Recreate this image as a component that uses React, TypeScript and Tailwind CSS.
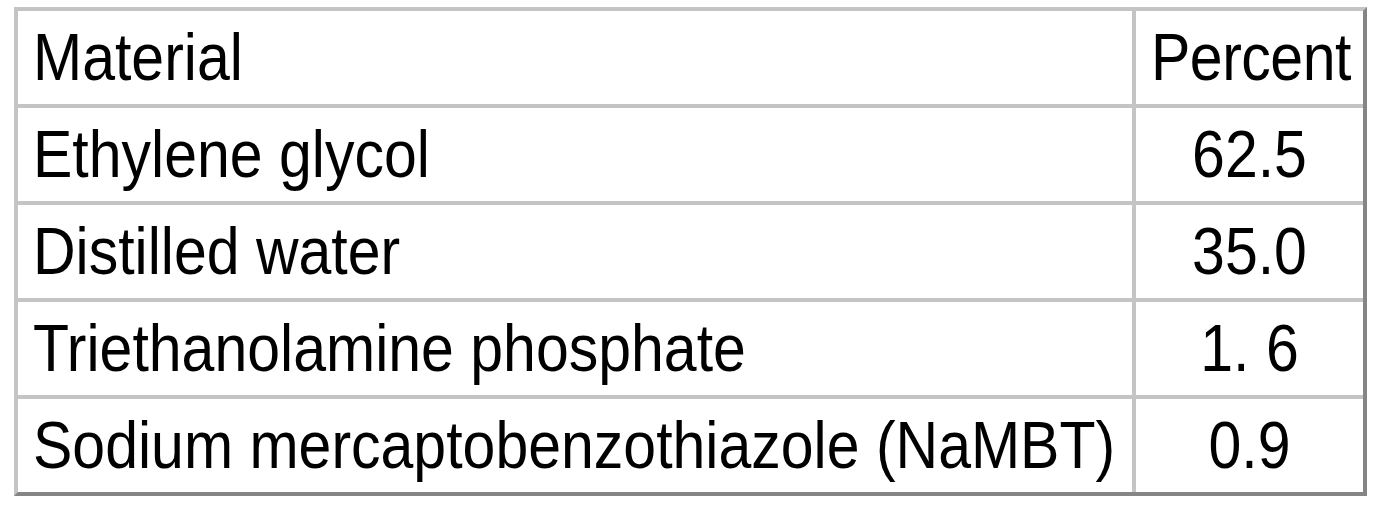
import { Fragment } from "react";

const rows = [
  { material: "Ethylene glycol", percent: "62.5" },
  { material: "Distilled water", percent: "35.0" },
  { material: "Triethanolamine phosphate", percent: "1. 6" },
  { material: "Sodium mercaptobenzothiazole (NaMBT)", percent: "0.9" },
];

function Cell({ children, center }: { children: React.ReactNode; center?: boolean }) {
  return (
    <div
      className={`flex h-[93px] items-center bg-white px-[15px] ${center ? "justify-center" : ""}`}
    >
      <span className="inline-block origin-center scale-y-[1.13] whitespace-pre leading-none">
        {children}
      </span>
    </div>
  );
}

export default function App() {
  return (
    <div
      className="min-h-screen bg-white pl-[14px] pt-[7px] text-[59px] text-black"
      style={{ fontFamily: '"Liberation Sans", Arial, sans-serif' }}
    >
      <div className="inline-block border-4 border-t-[#c4c4c4] border-l-[#c4c4c4] border-r-[#858585] border-b-[#858585]">
        <div className="grid grid-cols-[1114px_227px] gap-[4px] bg-[#c4c4c4]">
          <Cell>Material</Cell>
          <div className="tracking-[-0.5px]">
            <Cell>Percent</Cell>
          </div>
          {rows.map((r) => (
            <Fragment key={r.material}>
              <Cell>{r.material}</Cell>
              <Cell center>{r.percent}</Cell>
            </Fragment>
          ))}
        </div>
      </div>
    </div>
  );
}
